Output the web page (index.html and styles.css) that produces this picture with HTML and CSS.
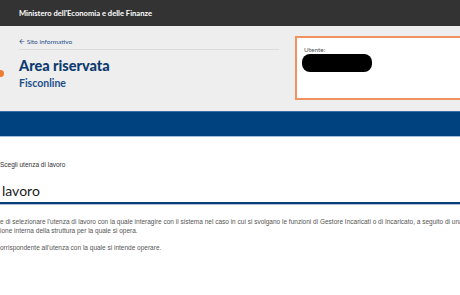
FILE: index.html
```html
<!doctype html>
<html lang="it">
<head>
  <meta charset="UTF-8">
  <title>Area riservata - Fisconline</title>
  <link rel="stylesheet" href="styles.css">
</head>
<body>
  <div class="topbar">Ministero dell'Economia e delle Finanze</div>
  <div class="hero">
    <span class="dot"></span>
    <div class="hero-left">
      <a class="back" href="#"><span class="arrow">&#129128;</span> Sito informativo</a>
      <h1 class="title">Area riservata</h1>
      <div class="subtitle">Fisconline</div>
    </div>
    <div class="userbox">
      <div class="user-label">Utente:</div>
      <div class="user-name"></div>
    </div>
  </div>
  <div class="band"></div>
  <div class="content">
    <div class="crumb">Scegli utenza di lavoro</div>
    <h2 class="heading">lavoro</h2>
    <p class="text">e di selezionare l'utenza di lavoro con la quale interagire con il sistema nel caso in cui si svolgano le funzioni di Gestore Incaricati o di Incaricato, a seguito di una<br>ione interna della struttura per la quale si opera.</p>
    <p class="text">orrispondente all'utenza con la quale si intende operare.</p>
  </div>
</body>
</html>
```
FILE: styles.css
```css
*{margin:0;
  padding:0;
  box-sizing:border-box;}
body{width:460px;
     height:295px;
     overflow:hidden;
     background:#fff;
     font-family:"Liberation Sans",Arial,sans-serif;}
.topbar{height:26px;
        background:#333;
        color:#fff;
        font-family:Lato,sans-serif;
        font-weight:bold;
        font-size:7.6px;
        padding-left:19px;
        display:flex;
        align-items:center;}
.hero{height:85px;
      background:#eee;
      display:flex;
      position:relative;}
.dot{position:absolute;
     left:-3px;
     top:44px;
     width:7px;
     height:7px;
     border-radius:50%;
     background:#f07c32;}
.hero-left{flex-shrink:0;
           width:260px;
           margin-left:19px;
           padding-top:11px;}
.back{display:block;
      color:#1d4e89;
      text-decoration:none;
      font-family:Lato,sans-serif;
      font-size:6.5px;
      height:13px;
      border-bottom:1px solid #dcdcdc;}
.arrow{font-size:7px;}
.title{font-family:Lato,sans-serif;
       font-weight:900;
       font-size:14.5px;
       color:#0d3b70;
       margin-top:7px;
       line-height:18px;}
.subtitle{font-family:Lato,sans-serif;
          font-weight:bold;
          font-size:10.5px;
          color:#1b4f8a;
          margin-top:2px;}
.userbox{flex-shrink:0;
         margin-left:16px;
         margin-top:10px;
         width:180px;
         height:64px;
         background:#fff;
         border:2px solid #f0915f;
         padding:8px 0 0 5px;}
.user-label{font-family:Lato,sans-serif;
            font-size:6.5px;
            color:#555;
            padding-left:2px;}
.user-name{width:70px;
           height:18px;
           background:#000;
           border-radius:8px;
           margin-top:1px;}
.band{height:26px;
      background:#00427f;
      border-top:1px solid #3a6ea5;
      border-bottom:1px solid #9fbcd9;}
.content{padding-top:24px;}
.crumb{font-size:6.5px;
       color:#333;}
.heading{font-family:Lato,sans-serif;
         font-weight:normal;
         font-size:14px;
         color:#1a1a1a;
         margin-top:14px;
         padding-left:2px;
         padding-bottom:3px;
         border-bottom:2px solid #0a3d75;
         box-shadow:0 1px 0 #a9c0d8;}
.text{font-size:6.5px;
      color:#555;
      line-height:9px;
      white-space:nowrap;
      margin-top:8px;}
.heading + .text{margin-top:13px;}
```
